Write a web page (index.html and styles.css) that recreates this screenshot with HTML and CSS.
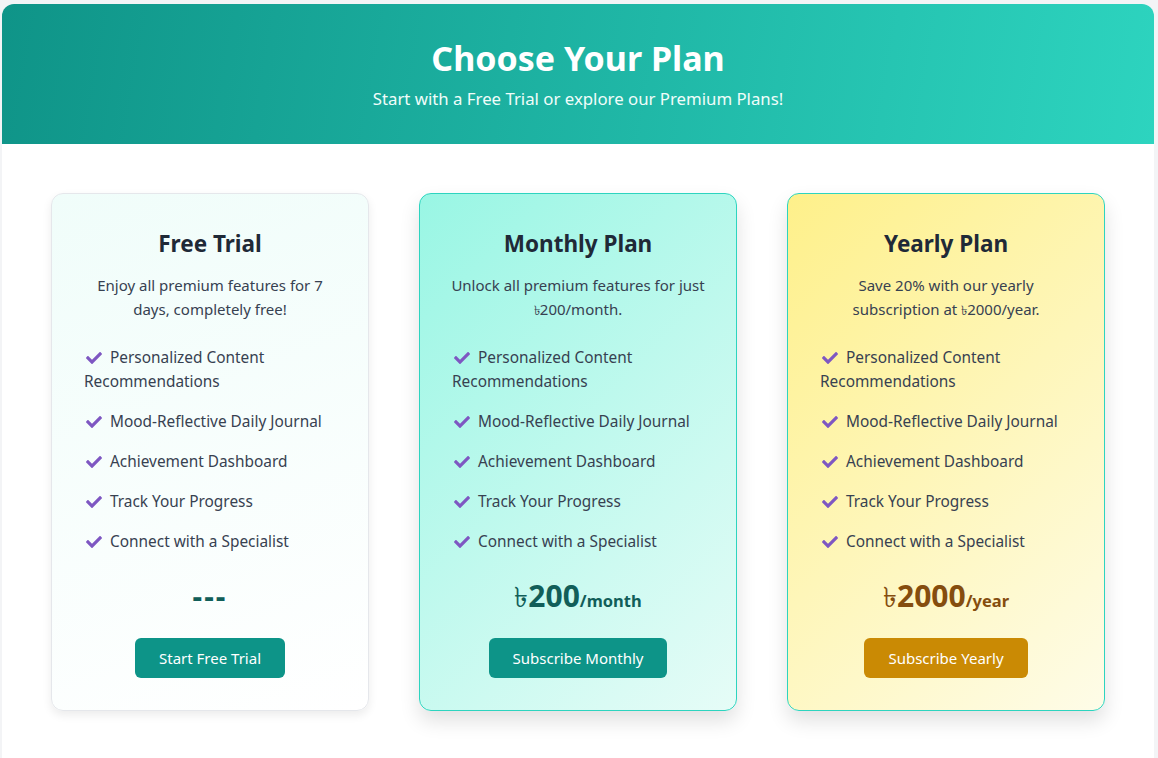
FILE: index.html
```html
<!DOCTYPE html>
<html lang="en">
<head>
<meta charset="utf-8">
<title>Choose Your Plan</title>
<link rel="stylesheet" href="styles.css">
</head>
<body>
<div class="page">
  <header class="hero">
    <h1 class="hero-title">Choose Your Plan</h1>
    <p class="hero-sub">Start with a Free Trial or explore our Premium Plans!</p>
  </header>
  <main class="plans">
    <section class="card card-free">
      <h2 class="card-title">Free Trial</h2>
      <p class="card-desc">Enjoy all premium features for 7 days, completely free!</p>
      <ul class="features">
        <li><svg class="check" viewBox="0 0 512 512"><path d="M173.9 439.4l-166.4-166.4c-10-10-10-26.2 0-36.2l36.2-36.2c10-10 26.2-10 36.2 0L192 312.7 432.1 72.6c10-10 26.2-10 36.2 0l36.2 36.2c10 10 10 26.2 0 36.2L210.1 439.4c-10 10-26.2 10-36.2 0z"/></svg> Personalized Content Recommendations</li>
        <li><svg class="check" viewBox="0 0 512 512"><path d="M173.9 439.4l-166.4-166.4c-10-10-10-26.2 0-36.2l36.2-36.2c10-10 26.2-10 36.2 0L192 312.7 432.1 72.6c10-10 26.2-10 36.2 0l36.2 36.2c10 10 10 26.2 0 36.2L210.1 439.4c-10 10-26.2 10-36.2 0z"/></svg> Mood-Reflective Daily Journal</li>
        <li><svg class="check" viewBox="0 0 512 512"><path d="M173.9 439.4l-166.4-166.4c-10-10-10-26.2 0-36.2l36.2-36.2c10-10 26.2-10 36.2 0L192 312.7 432.1 72.6c10-10 26.2-10 36.2 0l36.2 36.2c10 10 10 26.2 0 36.2L210.1 439.4c-10 10-26.2 10-36.2 0z"/></svg> Achievement Dashboard</li>
        <li><svg class="check" viewBox="0 0 512 512"><path d="M173.9 439.4l-166.4-166.4c-10-10-10-26.2 0-36.2l36.2-36.2c10-10 26.2-10 36.2 0L192 312.7 432.1 72.6c10-10 26.2-10 36.2 0l36.2 36.2c10 10 10 26.2 0 36.2L210.1 439.4c-10 10-26.2 10-36.2 0z"/></svg> Track Your Progress</li>
        <li><svg class="check" viewBox="0 0 512 512"><path d="M173.9 439.4l-166.4-166.4c-10-10-10-26.2 0-36.2l36.2-36.2c10-10 26.2-10 36.2 0L192 312.7 432.1 72.6c10-10 26.2-10 36.2 0l36.2 36.2c10 10 10 26.2 0 36.2L210.1 439.4c-10 10-26.2 10-36.2 0z"/></svg> Connect with a Specialist</li>
      </ul>
      <div class="price price-teal"><span class="amount dashes">---</span></div>
      <button class="btn btn-teal">Start Free Trial</button>
    </section>
    <section class="card card-monthly">
      <h2 class="card-title">Monthly Plan</h2>
      <p class="card-desc">Unlock all premium features for just <span class="tk">৳</span>200/month.</p>
      <ul class="features">
        <li><svg class="check" viewBox="0 0 512 512"><path d="M173.9 439.4l-166.4-166.4c-10-10-10-26.2 0-36.2l36.2-36.2c10-10 26.2-10 36.2 0L192 312.7 432.1 72.6c10-10 26.2-10 36.2 0l36.2 36.2c10 10 10 26.2 0 36.2L210.1 439.4c-10 10-26.2 10-36.2 0z"/></svg> Personalized Content Recommendations</li>
        <li><svg class="check" viewBox="0 0 512 512"><path d="M173.9 439.4l-166.4-166.4c-10-10-10-26.2 0-36.2l36.2-36.2c10-10 26.2-10 36.2 0L192 312.7 432.1 72.6c10-10 26.2-10 36.2 0l36.2 36.2c10 10 10 26.2 0 36.2L210.1 439.4c-10 10-26.2 10-36.2 0z"/></svg> Mood-Reflective Daily Journal</li>
        <li><svg class="check" viewBox="0 0 512 512"><path d="M173.9 439.4l-166.4-166.4c-10-10-10-26.2 0-36.2l36.2-36.2c10-10 26.2-10 36.2 0L192 312.7 432.1 72.6c10-10 26.2-10 36.2 0l36.2 36.2c10 10 10 26.2 0 36.2L210.1 439.4c-10 10-26.2 10-36.2 0z"/></svg> Achievement Dashboard</li>
        <li><svg class="check" viewBox="0 0 512 512"><path d="M173.9 439.4l-166.4-166.4c-10-10-10-26.2 0-36.2l36.2-36.2c10-10 26.2-10 36.2 0L192 312.7 432.1 72.6c10-10 26.2-10 36.2 0l36.2 36.2c10 10 10 26.2 0 36.2L210.1 439.4c-10 10-26.2 10-36.2 0z"/></svg> Track Your Progress</li>
        <li><svg class="check" viewBox="0 0 512 512"><path d="M173.9 439.4l-166.4-166.4c-10-10-10-26.2 0-36.2l36.2-36.2c10-10 26.2-10 36.2 0L192 312.7 432.1 72.6c10-10 26.2-10 36.2 0l36.2 36.2c10 10 10 26.2 0 36.2L210.1 439.4c-10 10-26.2 10-36.2 0z"/></svg> Connect with a Specialist</li>
      </ul>
      <div class="price price-teal"><span class="tk-big">৳</span><span class="amount">200</span><span class="per">/month</span></div>
      <button class="btn btn-teal">Subscribe Monthly</button>
    </section>
    <section class="card card-yearly">
      <h2 class="card-title">Yearly Plan</h2>
      <p class="card-desc">Save 20% with our yearly subscription at <span class="tk">৳</span>2000/year.</p>
      <ul class="features">
        <li><svg class="check" viewBox="0 0 512 512"><path d="M173.9 439.4l-166.4-166.4c-10-10-10-26.2 0-36.2l36.2-36.2c10-10 26.2-10 36.2 0L192 312.7 432.1 72.6c10-10 26.2-10 36.2 0l36.2 36.2c10 10 10 26.2 0 36.2L210.1 439.4c-10 10-26.2 10-36.2 0z"/></svg> Personalized Content Recommendations</li>
        <li><svg class="check" viewBox="0 0 512 512"><path d="M173.9 439.4l-166.4-166.4c-10-10-10-26.2 0-36.2l36.2-36.2c10-10 26.2-10 36.2 0L192 312.7 432.1 72.6c10-10 26.2-10 36.2 0l36.2 36.2c10 10 10 26.2 0 36.2L210.1 439.4c-10 10-26.2 10-36.2 0z"/></svg> Mood-Reflective Daily Journal</li>
        <li><svg class="check" viewBox="0 0 512 512"><path d="M173.9 439.4l-166.4-166.4c-10-10-10-26.2 0-36.2l36.2-36.2c10-10 26.2-10 36.2 0L192 312.7 432.1 72.6c10-10 26.2-10 36.2 0l36.2 36.2c10 10 10 26.2 0 36.2L210.1 439.4c-10 10-26.2 10-36.2 0z"/></svg> Achievement Dashboard</li>
        <li><svg class="check" viewBox="0 0 512 512"><path d="M173.9 439.4l-166.4-166.4c-10-10-10-26.2 0-36.2l36.2-36.2c10-10 26.2-10 36.2 0L192 312.7 432.1 72.6c10-10 26.2-10 36.2 0l36.2 36.2c10 10 10 26.2 0 36.2L210.1 439.4c-10 10-26.2 10-36.2 0z"/></svg> Track Your Progress</li>
        <li><svg class="check" viewBox="0 0 512 512"><path d="M173.9 439.4l-166.4-166.4c-10-10-10-26.2 0-36.2l36.2-36.2c10-10 26.2-10 36.2 0L192 312.7 432.1 72.6c10-10 26.2-10 36.2 0l36.2 36.2c10 10 10 26.2 0 36.2L210.1 439.4c-10 10-26.2 10-36.2 0z"/></svg> Connect with a Specialist</li>
      </ul>
      <div class="price price-gold"><span class="tk-big">৳</span><span class="amount">2000</span><span class="per">/year</span></div>
      <button class="btn btn-gold">Subscribe Yearly</button>
    </section>
  </main>
</div>
</body>
</html>
```

FILE: styles.css
```css
* { box-sizing: border-box; }
html, body { margin: 0; padding: 0; }
body {
  background: #f3f4f6;
  font-family: "Noto Sans", "Open Sans", sans-serif;
  color: #374151;
  padding: 4px 4px 0 2px;
}
.page {
  background: #ffffff;
  border-radius: 12px;
  overflow: hidden;
  min-height: 800px;
}
.hero {
  height: 140px;
  background: linear-gradient(100deg, #0f9488 0%, #2dd4bf 100%);
  text-align: center;
  color: #ffffff;
  padding-top: 32px;
}
.hero-title {
  margin: 0;
  font-size: 34px;
  line-height: 44px;
  font-weight: 700;
}
.hero-sub {
  margin: 6px 0 0;
  font-size: 16.8px;
  line-height: 26px;
  color: #f0fdfa;
}
.plans {
  display: grid;
  grid-template-columns: repeat(3, 318px);
  column-gap: 50px;
  padding: 49px 49px;
}
.card {
  border-radius: 12px;
  padding: 34px 32px 32px;
  display: flex;
  flex-direction: column;
  align-items: stretch;
  text-align: center;
}
.card-free {
  border: 1px solid #e5e7eb;
  background: linear-gradient(160deg, #f0fdfa 0%, #ffffff 100%);
  box-shadow: 0 4px 10px rgba(0,0,0,0.08);
}
.card-monthly {
  border: 1px solid #2dd4bf;
  background: linear-gradient(135deg, #99f6e4 0%, #e6fcf7 100%);
  box-shadow: 0 10px 20px rgba(0,0,0,0.12);
}
.card-yearly {
  border: 1px solid #2dd4bf;
  background: linear-gradient(135deg, #fef08a 0%, #fefce8 100%);
  box-shadow: 0 10px 20px rgba(0,0,0,0.12);
}
.card-title {
  margin: 0;
  font-size: 22.5px;
  line-height: 32px;
  font-weight: 700;
  color: #1f2937;
}
.card-desc {
  margin: 13px -4px 0;
  font-size: 15px;
  line-height: 24px;
  height: 48px;
  color: #374151;
}
.tk { font-size: 13px; line-height: 0; }
.features {
  list-style: none;
  margin: 25px 0 0;
  padding: 0;
  text-align: left;
}
.features li {
  font-size: 15.4px;
  line-height: 24px;
  color: #374151;
  margin-bottom: 16px;
}
.features li:last-child { margin-bottom: 0; }
.check {
  width: 16px;
  height: 16px;
  fill: #7e57c2;
  vertical-align: -3px;
  margin-left: 2px;
  margin-right: 4px;
}
.price {
  margin-top: 22px;
  height: 40px;
  line-height: 40px;
  font-weight: 700;
}
.price-teal { color: #115e59; }
.price-gold { color: #854d0e; }
.amount { font-size: 30px; }
.dashes { letter-spacing: 2px; }
.tk-big { font-size: 28px; font-weight: 400; }
.per { font-size: 16.5px; }
.btn {
  align-self: center;
  margin-top: 22px;
  height: 40px;
  padding: 0 24px;
  border: none;
  border-radius: 6px;
  font-family: inherit;
  font-size: 15px;
  color: #ffffff;
}
.btn-teal { background: #0d9488; }
.btn-gold { background: #ca8a04; }
```
